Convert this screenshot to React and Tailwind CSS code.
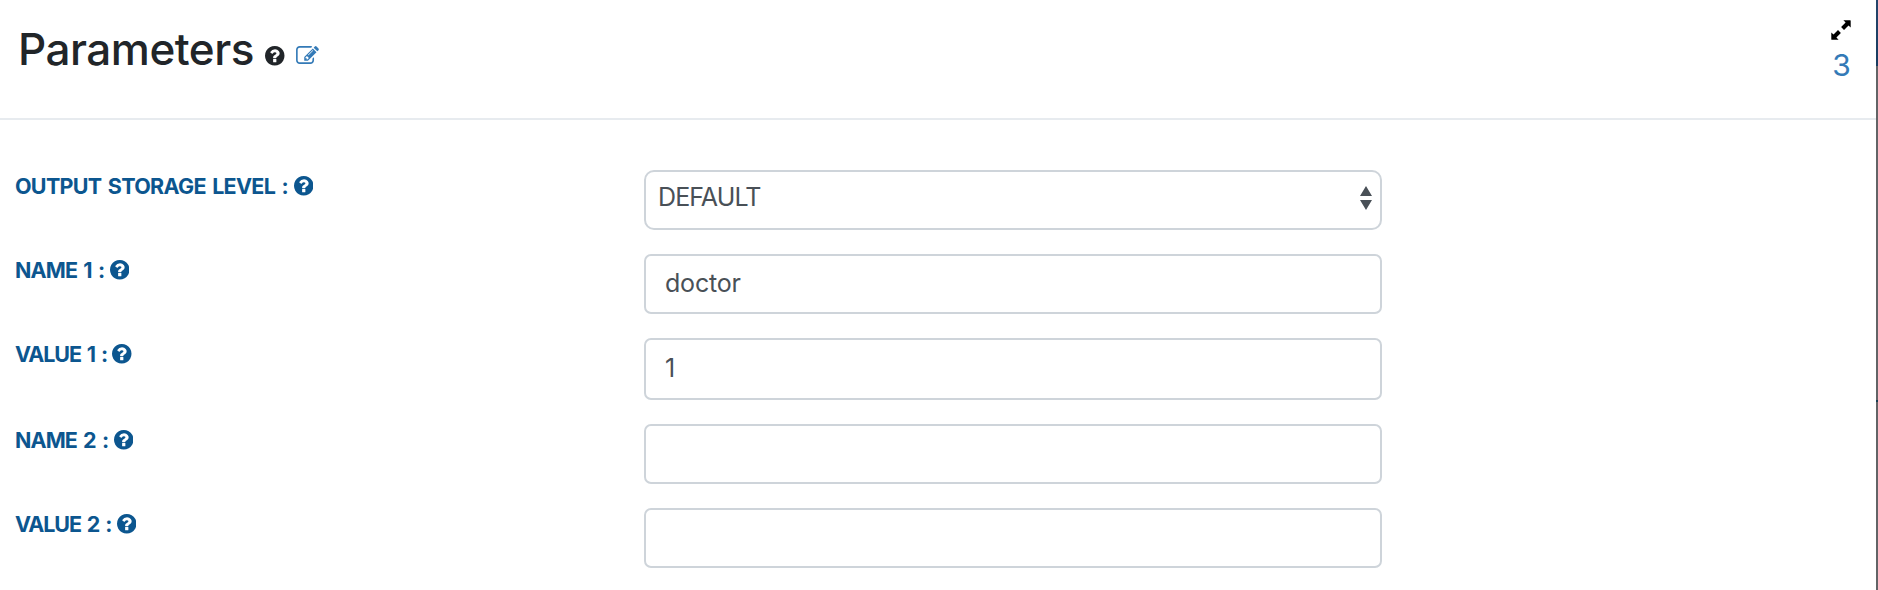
function HelpIcon({ className }) {
  return (
    <svg viewBox="128 128 1536 1536" fill="currentColor" className={className}>
      <path d="M1024 1376v-192q0-14-9-23t-23-9h-192q-14 0-23 9t-9 23v192q0 14 9 23t23 9h192q14 0 23-9t9-23zm256-672q0-88-55.5-163t-138.5-116-170-41q-243 0-371 213-15 24 8 42l132 100q7 6 19 6 16 0 25-12 53-68 86-92 34-24 86-24 48 0 85.5 26t37.5 59q0 38-20 61t-68 45q-63 28-115.5 86.5t-52.5 125.5v36q0 14 9 23t23 9h192q14 0 23-9t9-23q0-19 21.500-49.500t54.500-49.500q32-18 49-28.500t46-35 44.500-48 28-60.500 12.500-81zm384 192q0 209-103 385.500t-279.500 279.500-385.500 103-385.500-103-279.500-279.500-103-385.500 103-385.500 279.500-279.500 385.500-103 385.500 103 279.500 279.500 103 385.500z" />
    </svg>
  );
}

function EditIcon({ className }) {
  return (
    <svg viewBox="0 128 1792 1408" fill="currentColor" className={className}>
      <path d="M888 1184l116-116-152-152-116 116v56h96v96h56zm440-720q-16-16-33 1l-350 350q-17 17-1 33t33-1l350-350q17-17 1-33zm80 594v190q0 119-84.500 203.500t-203.500 84.500h-832q-119 0-203.500-84.500t-84.500-203.500v-832q0-119 84.500-203.500t203.500-84.500h832q63 0 117 25 15 7 18 23 3 17-9 29l-49 49q-14 14-32 8-23-6-45-6h-832q-66 0-113 47t-47 113v832q0 66 47 113t113 47h832q66 0 113-47t47-113v-126q0-13 9-22l64-64q15-15 35-7t20 29zm-96-738l288 288-672 672h-288v-288zm444 132l-92 92-288-288 92-92q28-28 68-28t68 28l152 152q28 28 28 68t-28 68z" />
    </svg>
  );
}

function ExpandIcon({ className }) {
  return (
    <svg viewBox="0 0 20 20" fill="currentColor" className={className}>
      <path d="M12.400 0.300H19.200Q19.700 .300 19.700 .800V7.600L17.500 5.500L13 10L10.100 7.100L14.600 2.600Z" />
      <path d="M7.600 19.700H.800Q.300 19.700 .300 19.200V12.400L2.500 14.500L7 10L9.900 12.900L5.400 17.400Z" />
    </svg>
  );
}

function FieldRow({ label, tracking, labelWidth, rowHeight, children }) {
  return (
    <div className={`flex items-start ${rowHeight}`}>
      <div className="flex h-8 w-[629px] shrink-0 items-center text-[#0c568f]">
        <span
          className={`shrink-0 whitespace-nowrap text-[21.500px] leading-8 font-bold [word-spacing:2px] ${tracking} ${labelWidth}`}
        >
          {label}
        </span>
        <HelpIcon className="size-[19.500px]" />
      </div>
      {children}
    </div>
  );
}

function TextBox({ value, height = 'h-[60px]' }) {
  return (
    <div
      className={`flex w-[738px] items-center rounded-[7px] border-2 border-[#ced4da] pl-[19px] text-[25px] tracking-[-0.200px] text-[#495057] ${height}`}
    >
      {value}
    </div>
  );
}

export default function App() {
  return (
    <div className="flex h-[590px] w-full overflow-hidden bg-white font-['Inter',sans-serif]">
      <main className="min-w-0 flex-1">
        <header className="flex h-[120px] items-start justify-between border-b-2 border-[#e7ebef] pl-[18px]">
          <div className="flex items-start pt-[25px]">
            <h1 className="w-[247px] text-[44px] leading-[48px] font-medium tracking-[-0.500px] whitespace-nowrap text-[#212529]">
              Parameters
            </h1>
            <HelpIcon className="mt-[21px] size-[19.500px] text-[#212529]" />
            <EditIcon className="mt-[21px] ml-[11px] h-[18px] w-[23px] text-[#337ab7]" />
          </div>
          <div className="mr-[25px] flex w-5 flex-col items-center pt-5">
            <ExpandIcon className="size-5 shrink-0 text-black" />
            <span className="mt-[9px] ml-px text-[30px] leading-8 text-[#337ab7]">3</span>
          </div>
        </header>
        <section className="pt-[50px] pl-[15px]">
          <FieldRow label="OUTPUT STORAGE LEVEL :" tracking="tracking-[-0.700px]" labelWidth="w-[278.500px]" rowHeight="h-[84px]">
            <div className="flex h-[60px] w-[738px] items-center justify-between rounded-[10px] border-2 border-[#ced4da] pr-[8px] pb-[4px] pl-[12px] text-[25px] tracking-[-0.900px] text-[#495057]">
              DEFAULT
              <svg viewBox="0 0 12 24" fill="currentColor" className="h-6 w-3">
                <path d="M6 0L12 10H0ZM0 14H12L6 24Z" />
              </svg>
            </div>
          </FieldRow>
          <FieldRow label="NAME 1 :" tracking="tracking-[-0.850px]" labelWidth="w-[94.500px]" rowHeight="h-[84px]">
            <TextBox value="doctor" />
          </FieldRow>
          <FieldRow label="VALUE 1 :" tracking="tracking-[-1.100px]" labelWidth="w-[97px]" rowHeight="h-[86px]">
            <TextBox value="1" height="h-[62px]" />
          </FieldRow>
          <FieldRow label="NAME 2 :" tracking="tracking-[-0.900px]" labelWidth="w-[98.500px]" rowHeight="h-[84px]">
            <TextBox />
          </FieldRow>
          <FieldRow label="VALUE 2 :" tracking="tracking-[-1.100px]" labelWidth="w-[101.500px]" rowHeight="h-[60px]">
            <TextBox />
          </FieldRow>
        </section>
      </main>
      <aside className="flex w-0.5 shrink-0 flex-col bg-[#626466]">
        <div className="h-[66px] bg-linear-to-b from-[#25456b] to-[#173c60]" />
        <div className="mt-[334px] h-0.5 bg-[#173c52]" />
      </aside>
    </div>
  );
}
